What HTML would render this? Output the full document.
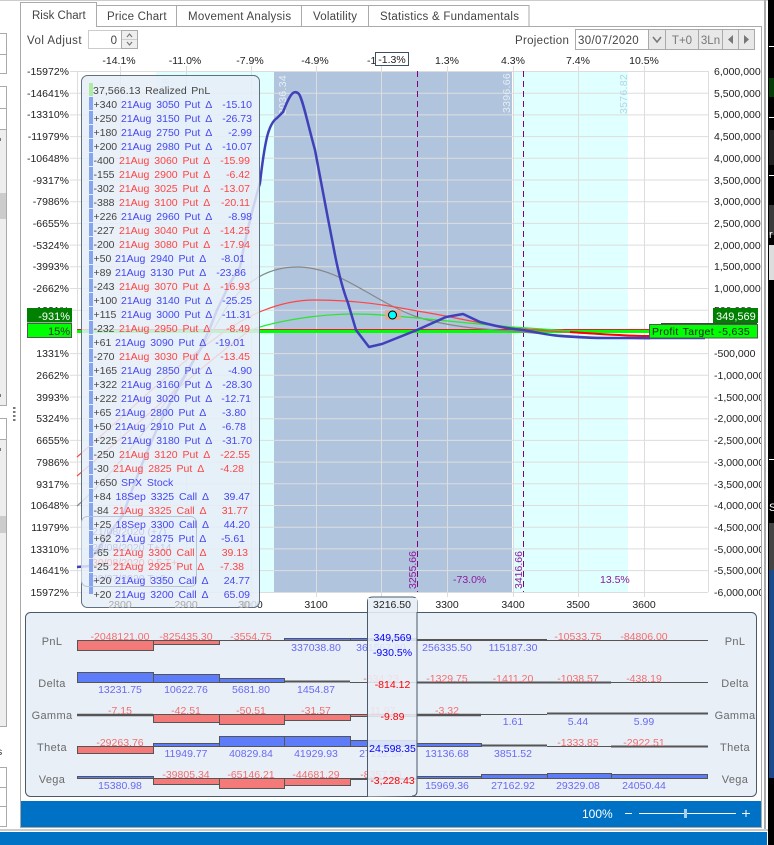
<!DOCTYPE html>
<html><head><meta charset="utf-8"><style>
html,body{margin:0;padding:0;background:#fff;width:774px;height:845px;overflow:hidden}
svg{display:block;font-family:"Liberation Sans",sans-serif;font-size:10.5px}
.a{fill:#222}.m{text-anchor:middle}.e{text-anchor:end}
.q{fill:#444}.b{fill:#4646f2;word-spacing:2px}.r{fill:#f44;word-spacing:2px}
.rr{fill:#f26e6e;text-anchor:middle;font-size:10.5px}.bb{fill:#6a6af2;text-anchor:middle}
.t{font-size:11px;fill:#6a6a6a;text-anchor:middle;letter-spacing:.35px}
.R{fill:#f47a7a;stroke:#555}.B{fill:#5c7cfa;stroke:#555}
.g{stroke:#ddd;stroke-width:1;fill:none}
</style></head><body>
<svg width="774" height="845" viewBox="0 0 774 845" xmlns="http://www.w3.org/2000/svg">
<rect width="774" height="845" fill="#fff"/>
<rect width="768" height="1" fill="#ccc"/>
<!-- left strip -->
<g fill="none" stroke="#aaa">
<rect x="-2" y="33.5" width="8.5" height="40" fill="#fff"/><path d="M0 54.5H6"/>
<rect x="-2" y="86.5" width="8.5" height="319" fill="#eee"/><rect x="0" y="87" width="6" height="42" fill="#fff" stroke="none"/><path d="M0 108.5H6M0 129.5H6"/>
<rect x="-2" y="418.5" width="8.5" height="308" fill="#eee"/><rect x="0" y="419" width="6" height="20" fill="#fff" stroke="none"/><path d="M0 439.5H6"/>
<rect x="-2" y="767.5" width="8.5" height="59" fill="#fff"/><path d="M0 787.5H6M0 806.5H6"/>
</g>
<rect x="0" y="193" width="6" height="26" fill="#ccc"/><rect x="0" y="516" width="6" height="17" fill="#ccc"/>
<rect x="0" y="138" width="1" height="3" fill="#777"/><rect x="0" y="394" width="1" height="3" fill="#777"/><rect x="0" y="448" width="1" height="3" fill="#777"/>
<rect x="13" y="407" width="2.500" height="2" fill="#777"/><rect x="13" y="411" width="2.500" height="2" fill="#777"/><rect x="13" y="415" width="2.500" height="2" fill="#777"/><rect x="13" y="419" width="2.500" height="2" fill="#777"/>
<text x="-3" y="755" fill="#333">s</text>
<!-- right strip -->
<rect x="764" y="0" width="2" height="830" fill="#aaa"/>
<rect x="768" y="0" width="6" height="845" fill="#000"/>
<rect x="769" y="46" width="5" height="1" fill="#fff"/><rect x="769" y="78" width="5" height="19" fill="#063c06"/><rect x="769" y="117" width="5" height="1" fill="#fff"/><rect x="769" y="130" width="5" height="35" fill="#222"/><rect x="769" y="175" width="5" height="1" fill="#fff"/><rect x="769" y="205" width="5" height="30" fill="#3a3a3a"/><rect x="769" y="245" width="5" height="35" fill="#ddd"/><rect x="769" y="459" width="5" height="1" fill="#fff"/><rect x="769" y="523" width="5" height="47" fill="#444"/><rect x="769" y="570" width="5" height="208" fill="#1a4a8c"/>
<text x="769" y="238" fill="#fff" font-size="11">r</text><text x="769" y="511" fill="#fff" font-size="11">S</text>
<!-- main frame -->
<rect x="20.500" y="26.500" width="741" height="801" fill="#fff" stroke="#aaa"/>
<!-- tabs -->
<g fill="#fff" stroke="#aaa">
<rect x="96.500" y="5.500" width="80" height="21"/><rect x="176.500" y="5.500" width="125" height="21"/><rect x="301.500" y="5.500" width="67" height="21"/><rect x="368.500" y="5.500" width="160.500" height="21"/>
<path d="M20.500 27V2.500H96.500V27" /></g>
<rect x="21" y="25" width="75" height="3" fill="#fff"/>
<!-- controls -->
<rect x="88.500" y="30.500" width="33" height="18" fill="#fff" stroke="#ccc"/>
<rect x="121.500" y="30.500" width="16" height="18" fill="#eee" stroke="#aaa"/><path d="M122 39.500H137" stroke="#ccc"/><path d="M127 37l2.500-3 2.500 3M127 42l2.500 3 2.500-3" fill="none" stroke="#777" stroke-width="1.200"/>
<g stroke="#aaa" fill="#e8e8e8"><rect x="575.500" y="29.500" width="73" height="20" fill="#fff"/><rect x="648.500" y="29.500" width="17" height="20"/><rect x="665.500" y="29.500" width="33" height="20"/><rect x="698.500" y="29.500" width="24" height="20"/><rect x="722.500" y="29.500" width="16" height="20"/><rect x="738.500" y="29.500" width="16" height="20"/></g>
<path d="M653 37l4 5 4-5" fill="none" stroke="#777" stroke-width="1.500"/>
<text x="682" y="44" class="m" fill="#777" style="font-size:11.5px">T+0</text><text x="710.500" y="44" class="m" fill="#777" style="font-size:11.500px">3Ln</text>
<path d="M733 35v9l-5-4.500zM744 35v9l5-4.500z" fill="#777"/>
<g fill="#444" style="font-size:11.5px">
<text x="32" y="19">Risk Chart</text><text x="107" y="20" letter-spacing=".2">Price Chart</text><text x="188" y="20" letter-spacing=".25">Movement Analysis</text><text x="313" y="20" letter-spacing=".2">Volatility</text><text x="380" y="20" letter-spacing=".25">Statistics &amp; Fundamentals</text>
<text x="27" y="44" letter-spacing=".45">Vol Adjust</text><text x="515" y="44" letter-spacing=".3">Projection</text>
<text x="117" y="44" text-anchor="end">0</text>
<text x="578" y="44" letter-spacing=".35">30/07/2020</text>
</g>
<!-- top percents -->
<g class="a"><text class="m" x="119" y="64">-14.1%</text><text class="m" x="185" y="64">-11.0%</text><text class="m" x="250" y="64">-7.9%</text><text class="m" x="315" y="64">-4.9%</text><text x="367" y="64">-1</text><text class="m" x="447" y="64">1.3%</text><text class="m" x="513" y="64">4.3%</text><text class="m" x="578" y="64">7.4%</text><text class="m" x="644" y="64">10.5%</text></g>
<rect x="375.500" y="52.500" width="33" height="13" fill="#fff" stroke="#3e5064"/><text class="m a" x="392" y="63">-1.3%</text>
<!-- chart regions -->
<rect x="156" y="71" width="118" height="521" fill="#e0ffff"/>
<rect x="274" y="71" width="238" height="521" fill="#b0c4de"/>
<rect x="513" y="71" width="115" height="521" fill="#e0ffff"/>
<path class="g" d="M70 71.500H708M70 93.200H708M70 114.900H708M70 136.600H708M70 158.300H708M70 180H708M70 201.700H708M70 223.400H708M70 245.100H708M70 266.800H708M70 288.500H708M70 310.200H708M70 353.600H708M70 375.300H708M70 397H708M70 418.700H708M70 440.400H708M70 462.100H708M70 483.800H708M70 505.500H708M70 527.200H708M70 548.900H708M70 570.600H708M70 592.500H708"/>
<path class="g" d="M77.500 71V597M120.500 66V597M186.500 66V597M251.500 66V597M316.500 66V597M381.500 66V597M447.500 66V597M513.500 66V597M578.500 66V597M644.500 66V597M708.500 71V592"/>
<!-- vertical labels -->
<g style="font-size:10.5px">
<text transform="translate(286 115) rotate(-90)" fill="#e6edf6" letter-spacing=".3">3036.34</text>
<text transform="translate(510 113) rotate(-90)" fill="#e6edf6" letter-spacing=".3">3396.66</text>
<text transform="translate(627 114) rotate(-90)" fill="#b4d4e6" letter-spacing=".3">3576.82</text>
<text transform="translate(169 116) rotate(-90)" fill="#b4d4e6">2856.18</text>
<text transform="translate(416 589) rotate(-90)" fill="#8b1a9b">3255.66</text>
<text transform="translate(522 589) rotate(-90)" fill="#8b1a9b">3416.66</text>
<text x="453" y="583" fill="#8b1a9b">-73.0%</text><text x="600" y="583" fill="#8b1a9b">13.5%</text>
</g>
<path d="M417.500 71V592M523.500 71V592" stroke="#800080" stroke-dasharray="6 4" fill="none"/>
<!-- zero lines -->
<rect x="77" y="330" width="572" height="3" fill="#0f0"/>
<rect x="77" y="329" width="572" height="1" fill="#d22"/>
<!-- curves -->
<path fill="none" stroke="#888" stroke-width="1.200" d="M77 506C130 460 190 370 225 310C245 280 270 267 297 267C340 267 370 300 417 317C450 327 480 329 512 331C560 336 600 338 650 339"/>
<path fill="none" stroke="#f44" stroke-width="1.200" d="M77 457C120 420 170 370 213 340C245 315 280 300 315 300C360 300 390 306 417 311C450 316 480 324 513 328C560 332 600 335 650 336"/>
<path fill="none" stroke="#f44" stroke-width="1.200" d="M77 476C120 440 190 375 250 330"/>
<path fill="none" stroke="#2ee52e" stroke-width="1.200" d="M250 330C280 320 320 314 355 314C390 314 430 320 513 327C540 329 570 331 600 333"/>
<path fill="none" stroke="#f00" stroke-width="2" d="M570 332C600 334 625 336 650 336"/>
<path fill="none" stroke="#4040b8" stroke-width="2.500" stroke-linejoin="round" d="M77 567L90 566L92 557L123 515C135 480 155 430 170 403C180 385 192 362 200 350L210 328L217 310L230 283L240 267C245 240 252 210 260 183C262 165 264 150 267 137C270 125 274 120 277 118L283 112C287 102 290 95 293 93Q296 91 299 94C303 100 308 125 315 150C320 175 328 220 335 255C338 270 343 290 348 303L356 330L369 347L382 344L417 330L446 317L463 314L480 322C495 326 510 329 523 330C535 332 548 335 560 336C575 337 590 338 600 338H705"/>
<rect x="385" y="310" width="16" height="10" fill="#e8a890" opacity=".8"/>
<circle cx="392.500" cy="315" r="4" fill="#0ff" stroke="#000"/>
<!-- axes left -->
<g class="a e">
<text x="69" y="75">-15972%</text><text x="69" y="97">-14641%</text><text x="69" y="118">-13310%</text><text x="69" y="140">-11979%</text><text x="69" y="162">-10648%</text><text x="69" y="184">-9317%</text><text x="69" y="205">-7986%</text><text x="69" y="227">-6655%</text><text x="69" y="249">-5324%</text><text x="69" y="270">-3993%</text><text x="69" y="292">-2662%</text><text x="69" y="357">1331%</text><text x="69" y="379">2662%</text><text x="69" y="401">3993%</text><text x="69" y="422">5324%</text><text x="69" y="444">6655%</text><text x="69" y="466">7986%</text><text x="69" y="488">9317%</text><text x="69" y="509">10648%</text><text x="69" y="531">11979%</text><text x="69" y="553">13310%</text><text x="69" y="574">14641%</text><text x="69" y="596">15972%</text>
</g>
<!-- axes right -->
<svg x="700" y="60" width="61" height="545" viewBox="700 60 61 545" overflow="hidden">
<g class="a">
<text x="714" y="75">6,000,000</text><text x="714" y="97">5,500,000</text><text x="714" y="118">5,000,000</text><text x="714" y="140">4,500,000</text><text x="714" y="162">4,000,000</text><text x="714" y="184">3,500,000</text><text x="714" y="205">3,000,000</text><text x="714" y="227">2,500,000</text><text x="714" y="249">2,000,000</text><text x="714" y="270">1,500,000</text><text x="714" y="292">1,000,000</text><text x="714" y="314">500,000</text><text x="714" y="357">-500,000</text><text x="714" y="379">-1,000,000</text><text x="714" y="401">-1,500,000</text><text x="714" y="422">-2,000,000</text><text x="714" y="444">-2,500,000</text><text x="714" y="466">-3,000,000</text><text x="714" y="488">-3,500,000</text><text x="714" y="509">-4,000,000</text><text x="714" y="531">-4,500,000</text><text x="714" y="553">-5,000,000</text><text x="714" y="574">-5,500,000</text><text x="714" y="596">-6,000,000</text>
</g></svg>
<!-- bottom x labels -->
<g class="m"><text x="251" y="608" fill="#222">3000</text><text x="316" y="608" fill="#222">3100</text><text x="447" y="608" fill="#222">3300</text><text x="513" y="608" fill="#222">3400</text><text x="578" y="608" fill="#222">3500</text><text x="644" y="608" fill="#222">3600</text></g>
<!-- status boxes -->
<text x="69" y="314" class="e a">-1331%</text>
<rect x="27" y="308" width="45" height="14.500" fill="#008000"/><text x="70" y="320" class="e" fill="#fff" style="font-size:11px">-931%</text>
<rect x="27.500" y="323.500" width="44" height="14" fill="#0f0" stroke="#555"/><text x="70" y="335" class="e" fill="#333" style="font-size:11px">15%</text>
<rect x="713" y="308" width="45" height="15" fill="#008000"/><text x="716" y="320" fill="#fff" style="font-size:11px">349,569</text>
<rect x="661" y="323" width="96" height="2" fill="#444"/>
<rect x="649.500" y="324.500" width="108" height="13.500" fill="#0f0" stroke="#555"/><text x="652" y="335" fill="#222" style="word-spacing:1px;letter-spacing:.35px">Profit Target -5,635</text>
<!-- positions panel -->
<rect x="81.500" y="75.500" width="178" height="532" rx="6" fill="#e6edf7" fill-opacity=".85" stroke="#5f7080"/>
<g class="m" fill="#aaa"><text x="120" y="608">2800</text><text x="186" y="608">2900</text><text x="244" y="608">30</text></g>
<rect x="81.500" y="516.500" width="115" height="70" rx="6" fill="none" stroke="#b8c4d4"/>
<g fill="#a8b4e0" opacity=".6"><text x="92" y="535">21/08/2020 (+7)</text><text x="92" y="551">28/08/2020 T+14</text><text x="92" y="566" fill="#f0a0a0">30/08/2020 0.5 T+</text><text x="92" y="582">30/07/2020 T+0</text></g>
<rect x="89" y="83" width="4" height="13" fill="#aeeaa0"/>
<path d="M91 97V594" stroke="#86a5ee" stroke-width="4" stroke-dasharray="13 1" fill="none"/>
<text x="93" y="94" class="q" style="word-spacing:1.5px;letter-spacing:.1px">37,566.13 Realized PnL</text>
<g>
<text x="93.500" y="108" class="q">+340</text><text x="121" y="108" class="b">21Aug 3050 Put Δ</text><text x="252" y="108" class="b e">-15.10</text>
<text x="93.500" y="122" class="q">+250</text><text x="121" y="122" class="b">21Aug 3150 Put Δ</text><text x="252" y="122" class="b e">-26.73</text>
<text x="93.500" y="136" class="q">+180</text><text x="121" y="136" class="b">21Aug 2750 Put Δ</text><text x="252" y="136" class="b e">-2.99</text>
<text x="93.500" y="150" class="q">+200</text><text x="121" y="150" class="b">21Aug 2980 Put Δ</text><text x="252" y="150" class="b e">-10.07</text>
<text x="93.500" y="164" class="q">-400</text><text x="119" y="164" class="r">21Aug 3060 Put Δ</text><text x="250" y="164" class="r e">-15.99</text>
<text x="93.500" y="178" class="q">-155</text><text x="119" y="178" class="r">21Aug 2900 Put Δ</text><text x="250" y="178" class="r e">-6.42</text>
<text x="93.500" y="192" class="q">-302</text><text x="119" y="192" class="r">21Aug 3025 Put Δ</text><text x="250" y="192" class="r e">-13.07</text>
<text x="93.500" y="206" class="q">-388</text><text x="119" y="206" class="r">21Aug 3100 Put Δ</text><text x="250" y="206" class="r e">-20.11</text>
<text x="93.500" y="220" class="q">+226</text><text x="121" y="220" class="b">21Aug 2960 Put Δ</text><text x="252" y="220" class="b e">-8.98</text>
<text x="93.500" y="234" class="q">-227</text><text x="119" y="234" class="r">21Aug 3040 Put Δ</text><text x="250" y="234" class="r e">-14.25</text>
<text x="93.500" y="248" class="q">-200</text><text x="119" y="248" class="r">21Aug 3080 Put Δ</text><text x="250" y="248" class="r e">-17.94</text>
<text x="93.500" y="262" class="q">+50</text><text x="115" y="262" class="b">21Aug 2940 Put Δ</text><text x="245" y="262" class="b e">-8.01</text>
<text x="93.500" y="276" class="q">+89</text><text x="115" y="276" class="b">21Aug 3130 Put Δ</text><text x="246" y="276" class="b e">-23.86</text>
<text x="93.500" y="290" class="q">-243</text><text x="119" y="290" class="r">21Aug 3070 Put Δ</text><text x="250" y="290" class="r e">-16.93</text>
<text x="93.500" y="304" class="q">+100</text><text x="121" y="304" class="b">21Aug 3140 Put Δ</text><text x="252" y="304" class="b e">-25.25</text>
<text x="93.500" y="318" class="q">+115</text><text x="121" y="318" class="b">21Aug 3000 Put Δ</text><text x="251" y="318" class="b e">-11.31</text>
<text x="93.500" y="332" class="q">-232</text><text x="119" y="332" class="r">21Aug 2950 Put Δ</text><text x="250" y="332" class="r e">-8.49</text>
<text x="93.500" y="346" class="q">+61</text><text x="115" y="346" class="b">21Aug 3090 Put Δ</text><text x="245" y="346" class="b e">-19.01</text>
<text x="93.500" y="360" class="q">-270</text><text x="119" y="360" class="r">21Aug 3030 Put Δ</text><text x="250" y="360" class="r e">-13.45</text>
<text x="93.500" y="374" class="q">+165</text><text x="121" y="374" class="b">21Aug 2850 Put Δ</text><text x="252" y="374" class="b e">-4.90</text>
<text x="93.500" y="388" class="q">+322</text><text x="121" y="388" class="b">21Aug 3160 Put Δ</text><text x="252" y="388" class="b e">-28.30</text>
<text x="93.500" y="402" class="q">+222</text><text x="121" y="402" class="b">21Aug 3020 Put Δ</text><text x="251" y="402" class="b e">-12.71</text>
<text x="93.500" y="416" class="q">+65</text><text x="115" y="416" class="b">21Aug 2800 Put Δ</text><text x="246" y="416" class="b e">-3.80</text>
<text x="93.500" y="430" class="q">+50</text><text x="115" y="430" class="b">21Aug 2910 Put Δ</text><text x="246" y="430" class="b e">-6.78</text>
<text x="93.500" y="444" class="q">+225</text><text x="121" y="444" class="b">21Aug 3180 Put Δ</text><text x="252" y="444" class="b e">-31.70</text>
<text x="93.500" y="458" class="q">-250</text><text x="119" y="458" class="r">21Aug 3120 Put Δ</text><text x="250" y="458" class="r e">-22.55</text>
<text x="93.500" y="472" class="q">-30</text><text x="113" y="472" class="r">21Aug 2825 Put Δ</text><text x="244" y="472" class="r e">-4.28</text>
<text x="93.500" y="486" class="q">+650</text><text x="121" y="486" class="b">SPX Stock</text>
<text x="93.500" y="500" class="q">+84</text><text x="115.500" y="500" class="b">18Sep 3325 Call Δ</text><text x="250" y="500" class="b e">39.47</text>
<text x="93.500" y="514" class="q">-84</text><text x="113" y="514" class="r">21Aug 3325 Call Δ</text><text x="248" y="514" class="r e">31.77</text>
<text x="93.500" y="528" class="q">+25</text><text x="115.500" y="528" class="b">18Sep 3300 Call Δ</text><text x="250" y="528" class="b e">44.20</text>
<text x="93.500" y="542" class="q">+62</text><text x="115" y="542" class="b">21Aug 2875 Put Δ</text><text x="245" y="542" class="b e">-5.61</text>
<text x="93.500" y="556" class="q">-65</text><text x="113" y="556" class="r">21Aug 3300 Call Δ</text><text x="248" y="556" class="r e">39.13</text>
<text x="93.500" y="570" class="q">-25</text><text x="113" y="570" class="r">21Aug 2925 Put Δ</text><text x="244" y="570" class="r e">-7.38</text>
<text x="93.500" y="584" class="q">+20</text><text x="115" y="584" class="b">21Aug 3350 Call Δ</text><text x="250" y="584" class="b e">24.77</text>
<text x="93.500" y="598" class="q">+20</text><text x="115" y="598" class="b">21Aug 3200 Call Δ</text><text x="250" y="598" class="b e">65.09</text>
</g>
<!-- bottom panel -->
<rect x="25.500" y="612.500" width="731" height="184" rx="5" fill="#e8eff7" stroke="#4a5a6a"/>
<g><text x="52" y="645" class="t">PnL</text><text x="52" y="687" class="t">Delta</text><text x="52" y="719" class="t">Gamma</text><text x="52" y="751" class="t">Theta</text><text x="52" y="783" class="t">Vega</text>
<text x="735" y="645" class="t">PnL</text><text x="735" y="687" class="t">Delta</text><text x="735" y="719" class="t">Gamma</text><text x="735" y="751" class="t">Theta</text><text x="735" y="783" class="t">Vega</text></g>
<!-- bars PnL -->
<g>
<rect class="R" x="77.500" y="640.500" width="76" height="10"/><rect class="R" x="153.500" y="640.500" width="66" height="4"/>
<path d="M219 640.500H285M547 640.500H708" stroke="#555" fill="none"/>
<rect class="B" x="284.500" y="638.500" width="66" height="2"/><rect class="B" x="350.500" y="638.500" width="66" height="2"/>
<path d="M416 640H547" stroke="#555" stroke-width="2" fill="none"/>
<!-- Delta -->
<rect class="B" x="77.500" y="672.500" width="76" height="10"/><rect class="B" x="153.500" y="674.500" width="66" height="8"/><rect class="B" x="219.500" y="678.500" width="65" height="4"/>
<path d="M284 681.500H350" stroke="#555" stroke-width="2" fill="none"/><path d="M350 682.500H416M611 682.500H708" stroke="#555" fill="none"/><path d="M416 682.500H611" stroke="#555" stroke-width="2" fill="none"/>
<!-- Gamma -->
<path d="M77 715H153M416 715H481" stroke="#555" stroke-width="2.500" fill="none"/><path d="M481 714.500H547" stroke="#555" fill="none"/><path d="M547 713.500H708" stroke="#555" stroke-width="2" fill="none"/>
<rect class="R" x="153.500" y="714.500" width="66" height="8"/><rect class="R" x="219.500" y="714.500" width="65" height="10"/><rect class="R" x="284.500" y="714.500" width="66" height="6"/><rect class="R" x="350.500" y="714.500" width="66" height="2"/>
<!-- Theta -->
<rect class="R" x="77.500" y="746.500" width="76" height="7"/><rect class="B" x="153.500" y="743.500" width="66" height="3"/><rect class="B" x="219.500" y="736.500" width="65" height="10"/><rect class="B" x="284.500" y="736.500" width="66" height="10"/><rect class="B" x="350.500" y="740.500" width="66" height="6"/><rect class="B" x="416.500" y="743.500" width="65" height="3"/>
<path d="M481 745.500H547M611 746.500H708" stroke="#555" stroke-width="2" fill="none"/><path d="M547 746.500H611" stroke="#555" fill="none"/>
<!-- Vega -->
<rect class="B" x="77.500" y="776.500" width="76" height="2"/><rect class="R" x="153.500" y="778.500" width="66" height="6"/><rect class="R" x="219.500" y="778.500" width="65" height="10"/><rect class="R" x="284.500" y="778.500" width="66" height="7"/>
<path d="M350 779H416" stroke="#555" stroke-width="2" fill="none"/>
<rect class="B" x="416.500" y="776.500" width="65" height="2"/><rect class="B" x="481.500" y="774.500" width="66" height="4"/><rect class="B" x="547.500" y="773.500" width="64" height="5"/><rect class="B" x="611.500" y="774.500" width="96" height="4"/>
</g>
<!-- bar labels -->
<g>
<text class="rr" x="120" y="640">-2048121.00</text><text class="rr" x="186" y="640">-825435.30</text><text class="rr" x="251" y="640">-3554.75</text><text class="bb" x="316" y="651">337038.80</text><text class="bb" x="381" y="651">361567.80</text><text class="bb" x="447" y="651">256335.50</text><text class="bb" x="513" y="651">115187.30</text><text class="rr" x="578" y="640">-10533.75</text><text class="rr" x="644" y="640">-84806.00</text>
<text class="bb" x="120" y="693">13231.75</text><text class="bb" x="186" y="693">10622.76</text><text class="bb" x="251" y="693">5681.80</text><text class="bb" x="316" y="693">1454.87</text><text class="rr" x="381" y="682">-634.23</text><text class="rr" x="447" y="682">-1329.75</text><text class="rr" x="513" y="682">-1411.20</text><text class="rr" x="578" y="682">-1038.57</text><text class="rr" x="644" y="682">-438.19</text>
<text class="rr" x="120" y="714">-7.15</text><text class="rr" x="186" y="714">-42.51</text><text class="rr" x="251" y="714">-50.51</text><text class="rr" x="316" y="714">-31.57</text><text class="rr" x="381" y="714">-11.97</text><text class="rr" x="447" y="714">-3.32</text><text class="bb" x="513" y="725">1.61</text><text class="bb" x="578" y="725">5.44</text><text class="bb" x="644" y="725">5.99</text>
<text class="rr" x="120" y="746">-29263.76</text><text class="bb" x="186" y="757">11949.77</text><text class="bb" x="251" y="757">40829.84</text><text class="bb" x="316" y="757">41929.93</text><text class="bb" x="381" y="757">27222.54</text><text class="bb" x="447" y="757">13136.68</text><text class="bb" x="513" y="757">3851.52</text><text class="rr" x="578" y="746">-1333.85</text><text class="rr" x="644" y="746">-2922.51</text>
<text class="bb" x="120" y="789">15380.98</text><text class="rr" x="186" y="778">-39805.34</text><text class="rr" x="251" y="778">-65146.21</text><text class="rr" x="316" y="778">-44681.29</text><text class="rr" x="381" y="778">-8357.53</text><text class="bb" x="447" y="789">15969.36</text><text class="bb" x="513" y="789">27162.92</text><text class="bb" x="578" y="789">29329.08</text><text class="bb" x="644" y="789">24050.44</text>
</g>
<!-- center column -->
<path d="M367.500 796.500V602q0-5 5-5H412q5 0 5 5V791q0 5-5 5" fill="#e8eff7" fill-opacity=".88" stroke="#4a5a6a"/>
<rect x="368" y="598" width="49" height="14" fill="#e8eff7"/>
<text class="m" x="392" y="608" fill="#222">3216.50</text>
<g class="m" style="font-size:10.5px">
<text x="392.500" y="641" fill="#00f">349,569</text><text x="392.500" y="656" fill="#00f">-930.5%</text>
<text x="392.500" y="688" fill="#f00">-814.12</text><text x="392.500" y="720" fill="#f00">-9.89</text>
<text x="392.500" y="752" fill="#00f">24,598.35</text><text x="392.500" y="784" fill="#f00">-3,228.43</text>
</g>
<!-- footer -->
<rect x="21" y="801" width="740" height="26" fill="#0072c6"/>
<text x="582" y="818" fill="#fff" style="font-size:12px">100%</text>
<path d="M625 813.500H632M639 813.500H736M742 813.500H750M746 810V817" stroke="#fff" fill="none"/>
<rect x="684" y="809" width="3" height="9" fill="#a8d0f0"/>
<!-- bottom -->
<rect x="0" y="829" width="768" height="2" fill="#ccc"/>
<rect x="0" y="832" width="767" height="13" fill="#0072c6"/>
</svg>
</body></html>
